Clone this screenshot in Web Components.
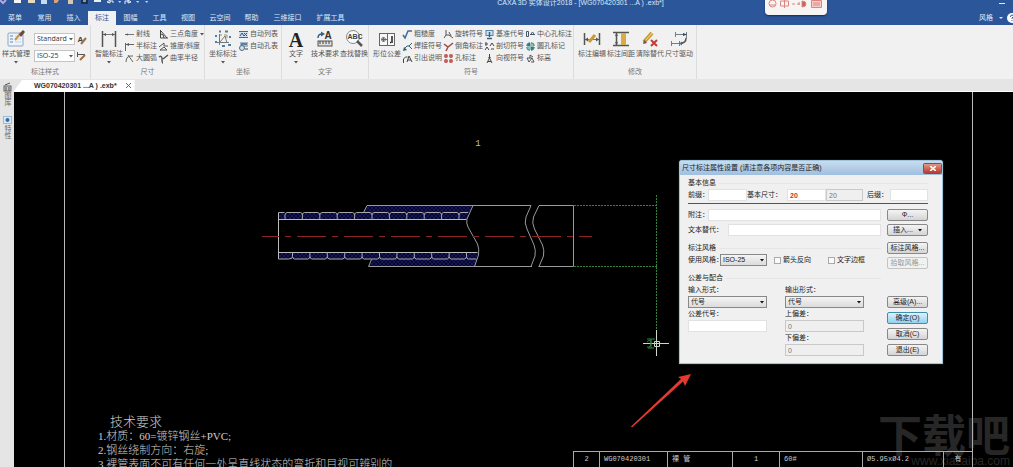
<!DOCTYPE html>
<html lang="zh-CN">
<head>
<meta charset="utf-8">
<title>CAXA 3D 实体设计2018</title>
<style>
html,body{margin:0;height:100%;overflow:hidden}
body{font:7px/12px "Liberation Sans","Noto Sans CJK SC",sans-serif;color:#555;background:#e5e5e5}
</style>
</head>
<body>
<cad-app></cad-app>
<script>
const ICONS={
style:'<rect x="1" y="3" width="15" height="13" rx="1" fill="#eef4fa" stroke="#8ba6c4"/><path d="M3 6h3M3 9h3M3 12h3" stroke="#5b87bb"/><path d="M8 6h6M8 9h6M8 12h6" stroke="#c5d3e2"/><path d="M8 10L13 4" stroke="#c9964a" stroke-width="2"/><path d="M12 4l4-4 2 2-4 5z" fill="#6b4a3a"/>',
smart:'<path d="M2.5 1v16M15.5 1v16" stroke="#555" stroke-width="1.5"/><path d="M3 4.5h12" stroke="#777"/><path d="M3 4.5l3-1.5v3zM15 4.5l-3-1.5v3z" fill="#555"/>',
coord:'<path d="M5.500 4v11M2 12.500h13M6 12l5-6 2 7" stroke="#777" fill="none"/><path d="M1 6h2M1 12h2M5 1.500h2M11 1.500h3M15 7h2M8 16h3M14 15h3" stroke="#4a7fae" stroke-width="2"/><path d="M6 5h2M10 5h3v3" stroke="#996" fill="none"/>',
bigA:'<text x="9" y="17" text-anchor="middle" font-family="Liberation Serif" font-weight="700" font-size="20" fill="#222">A</text>',
tech:'<text x="12" y="9" text-anchor="middle" font-family="Liberation Sans" font-weight="700" font-size="10" fill="#333">A</text><path d="M2 8Q2 4 6 4" stroke="#2f6390" stroke-width="1.500" fill="none"/><path d="M5 1.500l4 2.500-4 2.500z" fill="#2f6390"/><rect x="2" y="11" width="14" height="5" fill="#ddd" stroke="#555"/><path d="M4 11v3M7 11v3M10 11v3M13 11v3" stroke="#444"/>',
find:'<circle cx="8" cy="7" r="6.500" fill="#fafafa" stroke="#888"/><path d="M12 11l5 5" stroke="#555" stroke-width="2.500"/><text x="10" y="9" text-anchor="middle" font-family="Liberation Sans" font-weight="700" font-size="7" fill="#444">ABC</text>',
geo:'<rect x="1.500" y="3.500" width="15" height="12" fill="#f8f8f8" stroke="#666"/><path d="M9.500 4v11M3 9.500h6M5.500 7v5" stroke="#666"/><circle cx="5.500" cy="9.500" r="2" fill="none" stroke="#777"/><path d="M14 6v7M12 12.500h1" stroke="#222" stroke-width="1.500"/>',
edit:'<path d="M1.500 3v12M16.500 3v12" stroke="#555" stroke-width="1.500"/><path d="M2 9.500h14" stroke="#777"/><path d="M2 9.500l3-2v4zM16 9.500l-3-2v4z" fill="#555"/><path d="M6 12l6-7" stroke="#c99b36" stroke-width="3"/>',
space:'<path d="M1 2.500h16M1 15.500h16M4.500 3v12" stroke="#555" stroke-width="1.500"/><rect x="9" y="3" width="5" height="12" fill="#d9ac42"/><path d="M4.500 3l-1.500 3h3zM4.500 15l-1.500-3h3z" fill="#555"/>',
clear:'<path d="M3 12L11 3" stroke="#c99b36" stroke-width="4"/><path d="M2 14l1-4 3 3z" fill="#655"/><path d="M5 10l6-7" stroke="#f1db8c"/><path d="M10 10l6 6M16 10l-6 6" stroke="#c63b30" stroke-width="2"/>',
drive:'<path d="M5 4.500h11M5.500 2v5M16.500 2v6M2 13.500h11M1.500 11v5M9.500 11v5" stroke="#6c7f90"/><path d="M16 8Q16 13 11 13" fill="none" stroke="#555" stroke-width="1.500"/><path d="M9 13.500l3-2v4z" fill="#3675a8"/><path d="M13 3l4 1.500-4 1.500z" fill="#444"/>',
brushA:'<text x="3.500" y="7" text-anchor="middle" font-family="Liberation Sans" font-weight="700" font-size="8" fill="#444">A</text><path d="M4 9l5-6" stroke="#a26d43" stroke-width="2"/>',
brushD:'<path d="M0 2.500h8M.5 0v5" stroke="#555"/><path d="M3 8l5-5" stroke="#a26d43" stroke-width="2"/>',
ray:'<path d="M0 4.500h9" stroke="#777"/><path d="M0 4.500l3-1v2z" fill="#555"/>',
half:'<path d="M.5 1v8M1 2.500h8" stroke="#666"/><path d="M1 2.500l3-1.500v3z" fill="#555"/>',
arc:'<path d="M1 8Q1 1 8 2M3 1l5 7" stroke="#666" fill="none"/>',
angle:'<path d="M1.500 0v8H9M2 1l6 7M2 4q3 0 3 4" fill="none" stroke="#444"/>',
taper:'<path d="M0 5l5-4v3h4M1 8h7L5 5z" fill="none" stroke="#555"/>',
curve:'<path d="M0 3q3-2 3 2t1 4M4 5l5-4" fill="none" stroke="#555" stroke-width="1.500"/>',
list:'<rect y="1" width="9" height="7" fill="#cfe0ef"/><path d="M0 1.500h9M0 7.500h9" stroke="#456a8e"/><path d="M1 6l2-3 2 3M5 3l3 3M8 3L5 6" stroke="#2f5578" fill="none"/>',
holes:'<rect x="1" y="0" width="8" height="5" fill="#9eb8d0"/><circle cx="3" cy="6" r="2.500" fill="#ddd" stroke="#4b6d8c"/><path d="M2 2h6M6 7h3" stroke="#345"/>',
rough:'<path d="M0 5l2 3 3-7h4" fill="none" stroke="#3b6c9c" stroke-width="1.500"/>',
weld:'<path d="M1 7l3-3h2M9 1L6 4l3 3" fill="none" stroke="#2f6478"/><path d="M0 9l1-4 3 3z" fill="#255d75"/>',
leader:'<path d="M.5 9V5l2-2h2M4 8l2-6 3 6M5 6h3" fill="none" stroke="#444"/>',
rotate:'<path d="M2 0v5l-2 3M2 5h3l4 3M5 2l2 4" fill="none" stroke="#555"/>',
chamfer:'<path d="M0 2l4 3 5-4M4 5L2 9" fill="none" stroke="#a34743" stroke-width="1.500"/>',
hole:'<g fill="none" stroke="#bf4b46" stroke-width="1.500"><circle cx="2" cy="2" r="1.200"/><circle cx="7" cy="2" r="1.200"/><circle cx="2" cy="7" r="1.200"/><circle cx="7" cy="7" r="1.200"/></g>',
datum:'<rect x="1" y="0.500" width="7" height="5" fill="#cfe0ef" stroke="#5781a6"/><path d="M4.500 2v5M2 8.500h5" stroke="#345f88" stroke-width="1.500"/>',
section:'<path d="M0 2h3M1 0v4M5 4l2-3 2 3M0 8l2-3 2 3M6 7h3" fill="none" stroke="#444"/>',
view:'<path d="M4.500 0v3M2 9l2.500-5L7 9M3 7.500h3" fill="none" stroke="#444"/><path d="M3 3h3L4.500 5z" fill="#444"/>',
center:'<path d="M.5 1.500h2v5h-2zM4 4.500h5M5 4l1.500-2L8 4" fill="none" stroke="#456"/>',
round:'<circle cx="4.500" cy="4.500" r="4" fill="#7bbfb7" stroke="#3d8f88"/><path d="M4.500 0v9M0 4.500h9" stroke="#fff"/><path d="M4.500 4.500V1A4 4 0 0 0 1 4.500zM4.500 4.500V8A4 4 0 0 0 8 4.500z" fill="#2c7a78"/>',
elev:'<path d="M1 4h5L3 8zM4 4V1l3 2M5 8h3l-2-4" fill="none" stroke="#555"/>',
caret:'<path d="M0 0h4L2 2.500z" fill="#555"/>',
lib:'<rect x="1" y="3" width="7" height="5" fill="#ccc" stroke="#666"/><path d="M2 2L7 0M3 4v4M6 4v4" stroke="#555"/>',
prop:'<rect x=".5" y=".5" width="8" height="7" fill="#dce9f5" stroke="#9fb9d2"/><circle cx="4.500" cy="4" r="2" fill="#2d6fa8"/>'
};
const svg=(n,s)=>`<svg class="ic" width="${s}" height="${s}" viewBox="0 0 ${s} ${s}" overflow="visible" aria-hidden="true">${ICONS[n]||''}</svg>`;
const caret='<svg class="caret" width="4" height="3" viewBox="0 0 4 3" aria-hidden="true">'+ICONS.caret+'</svg>';
const define=(name,render)=>customElements.define(name,class extends HTMLElement{
  constructor(){super();this.attachShadow({mode:'open'});}
  connectedCallback(){this.shadowRoot.innerHTML=render(this);}
});
const BTN='button{all:unset;box-sizing:border-box;white-space:nowrap}';

define('rib-big',e=>`<style>:host{display:block;width:28px}${BTN}
button{display:flex;flex-direction:column;align-items:center;width:28px;padding-top:2px}.ic{display:block}.caret{margin-top:1px}</style>
<button>${svg(e.getAttribute('icon'),18)}<span>${e.getAttribute('label')}</span>${e.hasAttribute('menu')?caret:''}</button>`);

define('rib-small',e=>`<style>:host{display:block}${BTN}
button{display:flex;align-items:center;gap:2px;height:12px}</style>
<button>${svg(e.getAttribute('icon'),9)}<span>${e.getAttribute('label')}</span>${e.hasAttribute('menu')?caret:''}</button>`);

define('rib-combo',e=>`<style>:host{display:flex;gap:2px;align-items:center}.b{position:relative}
select{appearance:none;box-sizing:border-box;display:block;width:41px;height:12px;margin:0;padding:0 2px;border:1px solid #c4c4c4;border-radius:0;background:#fff;font:7px/10px "Open Sans",sans-serif;color:#333}
.caret{position:absolute;right:2px;top:5px}</style>
<span class="b"><select aria-label="${e.getAttribute('label')}"><option>${e.getAttribute('value')}</option></select>${caret}</span>${svg(e.getAttribute('icon'),9)}`);

define('rib-group',e=>`<style>:host{display:grid;grid-template-rows:38px 12px;box-sizing:border-box;padding-top:3px;border-right:1px solid #dcdcdc}
.c{display:flex;align-items:flex-start;gap:var(--gap,2px);padding-left:var(--pad,4px)}.t{text-align:center;color:#777}</style>
<div class="c"><slot></slot></div><div class="t">${e.getAttribute('label')}</div>`);

define('rib-col',e=>`<style>:host{display:flex;flex-direction:column;gap:var(--row-gap,0)}</style><slot></slot>`);

define('app-ribbon',e=>`<style>
:host{display:grid;grid-template-columns:91px 114px 77px 87px 205px 123px;height:54px;background:#f1f1f1;box-sizing:border-box}
.combos{--row-gap:5px;padding-top:5px;margin-left:2px}</style>
<rib-group label="标注样式" style="--pad:2px"><rib-big icon="style" label="样式管理" menu></rib-big><rib-col class="combos"><rib-combo label="文字样式" value="Standard" icon="brushA"></rib-combo><rib-combo label="标注样式" value="ISO-25" icon="brushD"></rib-combo></rib-col></rib-group>
<rib-group label="尺寸"><rib-big icon="smart" label="智能标注" menu></rib-big>
<rib-col><rib-small icon="ray" label="射线"></rib-small><rib-small icon="half" label="半标注"></rib-small><rib-small icon="arc" label="大圆弧"></rib-small></rib-col>
<rib-col><rib-small icon="angle" label="三点角度" menu></rib-small><rib-small icon="taper" label="锥度/斜度"></rib-small><rib-small icon="curve" label="曲率半径"></rib-small></rib-col></rib-group>
<rib-group label="坐标"><rib-big icon="coord" label="坐标标注" menu></rib-big><rib-col><rib-small icon="list" label="自动列表"></rib-small><rib-small icon="holes" label="自动孔表"></rib-small></rib-col></rib-group>
<rib-group label="文字" style="--pad:0px;--gap:1px"><rib-big icon="bigA" label="文字" menu></rib-big><rib-big icon="tech" label="技术要求"></rib-big><rib-big icon="find" label="查找替换"></rib-big></rib-group>
<rib-group label="符号"><rib-big icon="geo" label="形位公差"></rib-big>
<rib-col><rib-small icon="rough" label="粗糙度"></rib-small><rib-small icon="weld" label="焊接符号"></rib-small><rib-small icon="leader" label="引出说明"></rib-small></rib-col>
<rib-col><rib-small icon="rotate" label="旋转符号"></rib-small><rib-small icon="chamfer" label="倒角标注"></rib-small><rib-small icon="hole" label="孔标注"></rib-small></rib-col>
<rib-col><rib-small icon="datum" label="基准代号"></rib-small><rib-small icon="section" label="剖切符号"></rib-small><rib-small icon="view" label="向视符号"></rib-small></rib-col>
<rib-col><rib-small icon="center" label="中心孔标注"></rib-small><rib-small icon="round" label="圆孔标记"></rib-small><rib-small icon="elev" label="标高"></rib-small></rib-col></rib-group>
<rib-group label="修改" style="--gap:1px"><rib-big icon="edit" label="标注编辑"></rib-big><rib-big icon="space" label="标注间距"></rib-big><rib-big icon="clear" label="清除替代"></rib-big><rib-big icon="drive" label="尺寸驱动"></rib-big></rib-group>`);

define('app-header',e=>`<style>
:host{display:block;position:relative;background:#2b579a;color:#dfe8f5;height:25px;overflow:hidden}
.top{display:grid;grid-template-columns:1fr auto 1fr;height:11px;line-height:6px;overflow:hidden}
.top svg{display:block}.name{padding-left:148px;white-space:nowrap}
.min{justify-self:end;width:6px;height:1px;margin:3px 8px;background:#dfe8f5}
.bar{display:flex;justify-content:space-between;height:14px}
nav{display:grid;grid-template-columns:30px 29px 29px 28px 29px 29px 28px 36px 27px 45px 41px}
a{color:inherit;text-decoration:none;text-align:center;line-height:14px}
a.on{background:#f1f1f1;color:#2b579a}
.r{display:flex;align-items:center;gap:4px;margin-right:-4px}.r svg{display:block}
button{all:unset;display:flex;align-items:center;gap:6px}
.pill{position:absolute;left:765px;top:-6px;width:62px;height:21px;border-radius:4px;background:#f7f4f4;box-shadow:0 1px 2px #142c55}
.pill svg{display:block}</style>
<div class="top"><svg width="152" height="8" viewBox="0 0 152 8" aria-hidden="true"><path d="M0 0l3 3 3-3" stroke="#b7a6e0" stroke-width="2" fill="none"/><path d="M14 0h7v3h-7z" fill="#f5f5f5"/><path d="M28 0h7v3h-7z" fill="#e6d9c0"/><path d="M41 0h6v4h-6z" fill="#c4dcf0"/><path d="M54 0h5l-2 3h-3z" fill="#d5a47c"/><path d="M68 0h5v4h-5z" fill="#d8c6b0"/><path d="M81 0h7v4h-7z" fill="#1d2f4d"/><path d="M83 1h3" stroke="#fff"/><path d="M94 0h7v2h-7z" fill="#e9f1ec"/><path d="M107 2l3-2v3zM110 1h3v2M131 2l-3-2v3zM125 4V1h4" stroke="#e4ecf7" fill="none"/><path d="M118 1h3l-1 2zM136 1h3l-1 2zM145 1h3l-1 2z" fill="#cfdcf0"/></svg>
<span class="name">CAXA 3D 实体设计2018 - [WG070420301 ...A ) .exb*]</span><span class="min"></span></div>
<div class="bar"><nav>${['菜单','常用','插入','标注','图幅','工具','视图','云空间','帮助','三维接口','扩展工具'].map(t=>`<a href="#"${t==='标注'?' class="on"':''}>${t}</a>`).join('')}</nav>
<div class="r"><button>风格<svg width="4" height="3"><path d="M0 0h4L2 2z" fill="#dfe8f5"/></svg></button><svg width="10" height="10" viewBox="0 0 10 10"><circle cx="5" cy="5" r="5" fill="#fff"/><path d="M3.500 4q0-2 1.500-2t1.500 1.500L5 5v1M5 7v1" stroke="#2b579a" fill="none"/></svg></div></div>
<div class="pill"><svg width="62" height="20" viewBox="0 0 62 20" fill="none" stroke="#dd8680" aria-hidden="true"><circle cx="7.500" cy="9.500" r="3.500"/><path d="M5 11h5M15.500 7h8v5h-8zM19.500 6v8M27 10h3M32 10h3M34 8v3"/><path d="M37 7q4 0 4 3t-4 3z" fill="#d45d57"/><path d="M46.500 6.500h10v7h-10z" fill="#f6cdc9"/><path d="M48 9h7M48 11h7"/></svg></div>`);

define('side-dock',e=>`<style>:host{display:flex;flex-direction:column;align-items:center;padding-top:4px;gap:10px}${BTN}
button{display:flex;flex-direction:column;align-items:center;color:#666}.ic{display:block}span{writing-mode:vertical-rl;line-height:8px}</style>
<button>${svg('lib',9)}<span>图库</span></button><button>${svg('prop',9)}<span>特性</span></button>`);

define('doc-tabs',e=>`<style>:host{display:flex;height:13px;align-items:flex-end;border-bottom:1px solid #fff;box-sizing:border-box}${BTN}
.tab{display:flex;align-items:center;gap:9px;height:11px;padding:0 4px 0 20px;background:#fff;clip-path:polygon(0 100%,8px 0,100% 0,100% 100%);color:#333;font-weight:600}
svg{display:block}</style><div class="tab"><span>WG070420301 ...A ) .exb*</span><button aria-label="关闭"><svg width="5" height="5"><path d="M0 0l5 5M5 0l-5 5" stroke="#666"/></svg></button></div>`);

/* Wound hose drawing; world coordinates are window coordinates */
const coils=()=>{let s='';
 for(let i=0;i<11;i++){const x=285+i*17.4;s+=`M${x} 219.500V215q0-2 2-2.500h${i<10?13.4:7}${i<10?'q2 .5 2 2.500':''}`}
 for(let i=0;i<11;i++){const x=292.500+i*17.4;s+=`M${x} 252.500v4q0 2 2 2.500h${i<10?13.4:8}${i<10?'q2-.5 2-2.500':''}`}
 return s};
define('hose-drawing',e=>`<style>:host{display:block;position:absolute;inset:0}svg{display:block;width:100%;height:100%}</style>
<svg><defs><pattern id="h" width="4" height="4" patternUnits="userSpaceOnUse"><rect width="4" height="4" fill="#06062a"/><path d="M0 4L4 0M0 0l4 4" stroke="#22227c" stroke-width=".6"/></pattern></defs>
<g transform="translate(-14 -92)" fill="none" stroke="#999">
<path d="M64.500 92v1000M972.500 92v1000" stroke="#bbb"/>
<path d="M363 213l4-7.500h106l-6 14H279v-7zM279 252.500h199v7l-3 7H368.500l3-7H279z" fill="url(#h)" stroke="none"/>
<path d="M363.500 212.500l3.500-7h164M539 205.500h34.500v61H538.500M532 266.500H368.500l3-7"/>
<path d="M278.500 212.500v46.500M278.500 219.500h188M278.500 252.500h199" stroke="#bbb"/>
<path d="M278.500 212.500h6M278.500 259h10q4 0 4-2.500${coils()}" stroke="#a8a8a8"/>
<path d="M473 205.500l-6 13.500q-1 4 1 8l9.500 17q2 5 1 11l-4 11.500"/>
<path d="M531 205.500l-5 11.500q-2 6 1 12l7 16q2 5 1 11l-4 10.500M539 205.500l-5.500 11.500q-2 6 1 12l8 16q2 5 1 11l-4.500 10.500"/>
<path d="M262 236.500h330" stroke="#8c2524" stroke-dasharray="29 6 6 6" stroke-dashoffset="12"/>
<path d="M574 205.500h84M574 266.500h84M656.500 195v135" stroke="#37813e" stroke-dasharray="2 1"/>
<path d="M656.500 330v26M643 343.500h26M654.500 341.500h5v5h-5z" stroke="#ccd8cc"/>
<path d="M647 339h8M647 342q4-4 4 1t-4 4M648 348h6M651 339v9" stroke="#2d8a38"/>
<path d="M631 426.500L681 379l-3-2 13-3-6 12-2-4.500-51 46z" fill="#e23a2e" stroke="none"/>
</g>
<g transform="translate(-14 -92)"><text x="478" y="146" text-anchor="middle" fill="#bbb" font-family="Liberation Mono" font-size="9">1</text></g></svg>`);

define('tech-notes',e=>`<style>:host{display:block;color:#ccc;font:300 11px/14px "Liberation Serif","Noto Sans CJK SC",serif;white-space:nowrap}
h2{margin:0 0 0 12px;font:300 13px/16px "Noto Sans CJK SC",sans-serif}p{margin:0}</style>
<h2>技术要求</h2><p>1.材质：60=镀锌钢丝+PVC;</p><p>2.钢丝绕制方向：右旋;</p><p>3.裸管表面不可有任何一处呈直线状态的弯折和目视可辨别的</p>`);

define('bom-table',e=>`<style>:host{display:block}table{border-collapse:collapse;table-layout:fixed;width:400px;color:#ccc;font:7px/15px "Liberation Mono","Noto Sans CJK SC",monospace}
td{border:1px solid #aaa;border-bottom:0;padding:0 4px;height:15px;white-space:nowrap}.c{text-align:center;padding:0}</style>
<table><colgroup><col style="width:26px"><col style="width:68px"><col style="width:65px"><col style="width:47px"><col style="width:83px"><col style="width:81px"><col></colgroup>
<tr><td class="c">2</td><td>WG070420301</td><td>裸 管</td><td class="c">1</td><td>60#</td><td>Ø5.95xØ4.2</td><td class="c">有</td></tr></table>`);

define('site-mark',e=>`<style>:host{display:block;text-align:right;color:#8c8c8c;opacity:.28;white-space:nowrap}
b{display:block;font:700 44px/44px "Noto Sans CJK SC",sans-serif}span{display:block;font:12px/12px "Liberation Sans",sans-serif}</style><b>下载吧</b><span>www.xiazaiba.com</span>`);

define('dlg-field',e=>{const v=e.getAttribute('value')||'',dis=e.hasAttribute('disabled')?' disabled':'';
 const l=e.getAttribute('label');
 return `<style>:host{display:block}label{display:flex;align-items:center}:host([stack]) label{display:block}
.l{display:block;flex:none;width:var(--lw,auto);line-height:12px;white-space:nowrap;color:#222}
.b{display:block;position:relative;flex:1;min-width:0}
input,select{appearance:none;box-sizing:border-box;display:block;width:100%;height:12px;margin:0;padding:0 2px;border:1px solid #e2e2e2;border-radius:0;background:#fff;font:var(--fw,400) 7px/10px "Liberation Sans","Noto Sans CJK SC",sans-serif;color:var(--ink,#222)}
input:disabled{background:#efefef;border-color:#c9c9c9;color:#777}
select{border:1px solid #888;background:linear-gradient(#f4f4f4,#dcdcdc)}
.caret{position:absolute;right:3px;top:5px}.caret path{fill:#111}</style>
<label>${l?`<span class="l">${l}</span>`:''}<span class="b">${e.hasAttribute('select')?`<select><option>${v}</option></select>${caret}`:`<input value="${v}"${dis}${l?'':` aria-label="${e.getAttribute('name')}"`}>`}</span></label>`});

define('dlg-check',e=>`<style>:host{display:block}label{display:flex;align-items:center;gap:2px;color:#222}
input{appearance:none;box-sizing:border-box;width:7px;height:7px;margin:0;border:1px solid #aaa;background:#fafafa}</style><label><input type="checkbox"><span><slot></slot></span></label>`);

define('dlg-button',e=>`<style>:host{display:block}button{box-sizing:border-box;display:flex;align-items:center;justify-content:center;gap:5px;width:100%;height:12px;margin:0;padding:0;border:1px solid #888;border-radius:2px;background:linear-gradient(#f4f4f4,#d4d4d4);font:inherit;line-height:10px;color:#222;white-space:nowrap}
button:disabled{background:#f1f1f1;border-color:#c4c4c4;color:#999}:host([primary]) button{background:linear-gradient(#dff2fb,#8fd3ee);border-color:#3c8fae}.caret path{fill:#111}</style>
<button${e.hasAttribute('disabled')?' disabled':''}><slot></slot>${e.hasAttribute('menu')?caret:''}</button>`);

define('size-dialog',e=>`<style>
:host{display:block;box-sizing:border-box;width:264px;border:1px solid #9fc3d8;border-radius:3px 3px 0 0;background:#f0f0f0;color:#222;box-shadow:0 0 1px #7fb2c8}
header{display:flex;justify-content:space-between;align-items:center;height:14px;padding:0 1px 0 2px;background:linear-gradient(#c9dcee,#9fbfdf)}
header button{all:unset;display:flex;align-items:center;justify-content:center;width:17px;height:9px;border-radius:1px;background:linear-gradient(#e09a8c,#b9392a);box-shadow:0 0 0 1px #8b4a48}
.body{padding:2px 14px 7px 8px}
.legend{display:flex;align-items:center;gap:3px;height:12px}.legend::after{content:"";flex:1;height:1px;background:#e6e6e6}
.first{display:grid;grid-template-columns:59px 79px 37px 4px 61px;border-bottom:1px solid #555;padding-bottom:2px}
.cols{display:grid;grid-template-columns:193px 41px;justify-content:space-between;padding-top:5px}
.main,.side,.set{display:flex;flex-direction:column;gap:3px}
.side{justify-content:space-between}.last{gap:4px}.gap{margin-top:3px}
.style{display:grid;grid-template-columns:79px 7px 54px 53px;align-items:center}
.pair{display:grid;grid-template-columns:79px 79px;column-gap:18px}
.tol{margin-top:3px}</style>
<header><span>尺寸标注属性设置 (请注意各项内容是否正确)</span><button aria-label="关闭"><svg width="6" height="5"><path d="M0 0l6 5M6 0l-6 5" stroke="#fff" stroke-width="1.500"/></svg></button></header>
<div class="body"><div class="legend">基本信息</div>
<div class="first"><dlg-field label="前缀：" style="--lw:20px"></dlg-field><dlg-field label="基本尺寸：" value="20" style="--lw:40px;--ink:#c8322c;--fw:700"></dlg-field><dlg-field name="计算值" value="20" disabled></dlg-field><span></span><dlg-field label="后缀：" style="--lw:23px"></dlg-field></div>
<div class="cols"><div class="main">
<dlg-field label="附注：" style="--lw:20px"></dlg-field><dlg-field label="文本替代：" style="--lw:40px"></dlg-field>
<div><div class="legend gap">标注风格</div>
<div class="style"><dlg-field select label="使用风格：" value="ISO-25" style="--lw:32px"></dlg-field><span></span><dlg-check>箭头反向</dlg-check><dlg-check>文字边框</dlg-check></div></div>
<div class="tol"><div class="legend">公差与配合</div>
<div class="pair"><dlg-field stack select label="输入形式：" value="代号"></dlg-field><dlg-field stack select label="输出形式：" value="代号"></dlg-field><dlg-field stack label="公差代号："></dlg-field><dlg-field stack label="上偏差：" value="0" disabled></dlg-field><span></span><dlg-field stack label="下偏差：" value="0" disabled></dlg-field></div></div>
</div>
<div class="side"><div class="set"><dlg-button>Φ...</dlg-button><dlg-button menu>插入...</dlg-button><dlg-button class="gap">标注风格...</dlg-button><dlg-button disabled>拾取风格...</dlg-button></div>
<div class="set last"><dlg-button>高级(A)...</dlg-button><dlg-button primary>确定(O)</dlg-button><dlg-button>取消(C)</dlg-button><dlg-button>退出(E)</dlg-button></div></div></div></div>`);

define('cad-canvas',e=>`<style>:host{display:block;position:relative;background:#000;overflow:hidden}
size-dialog{position:absolute;left:665px;top:68px}
tech-notes{position:absolute;left:84px;top:321px}
bom-table{position:absolute;right:40px;bottom:0}
site-mark{position:absolute;right:3px;bottom:0}</style>
<hose-drawing></hose-drawing><tech-notes></tech-notes><site-mark></site-mark><bom-table></bom-table><size-dialog></size-dialog>`);

define('cad-app',e=>`<style>:host{display:grid;grid-template-rows:auto auto 1fr;height:100vh;overflow:hidden}
.work{display:grid;grid-template-columns:14px 1fr;min-height:0}.doc{display:grid;grid-template-rows:auto 1fr;min-height:0}</style>
<app-header></app-header><app-ribbon></app-ribbon><div class="work"><side-dock></side-dock><div class="doc"><doc-tabs></doc-tabs><cad-canvas></cad-canvas></div></div>`);
</script>
</body>
</html>
